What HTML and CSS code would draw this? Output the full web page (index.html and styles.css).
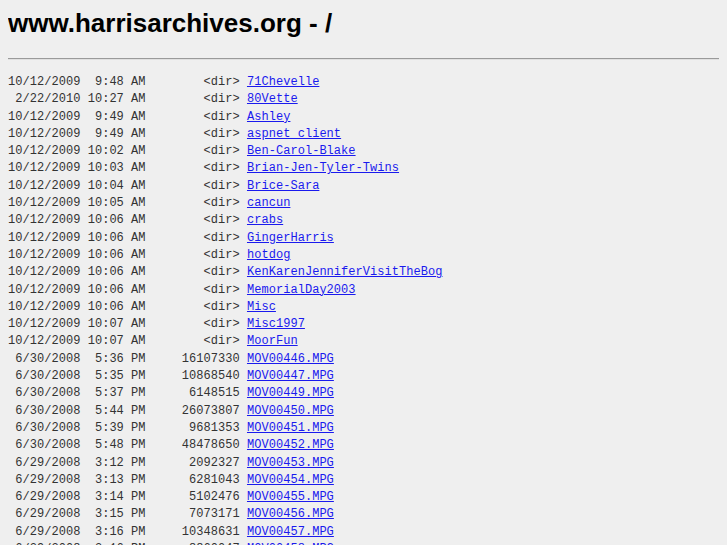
FILE: index.html
```html
<!DOCTYPE html>
<html>
<head>
<meta charset="UTF-8">
<title>www.harrisarchives.org - /</title>
<link rel="stylesheet" href="styles.css">
</head>
<body>
<h1>www.harrisarchives.org - /</h1>
<hr>
<pre>
10/12/2009  9:48 AM        &lt;dir&gt; <a href="#">71Chevelle</a>
 2/22/2010 10:27 AM        &lt;dir&gt; <a href="#">80Vette</a>
10/12/2009  9:49 AM        &lt;dir&gt; <a href="#">Ashley</a>
10/12/2009  9:49 AM        &lt;dir&gt; <a href="#">aspnet_client</a>
10/12/2009 10:02 AM        &lt;dir&gt; <a href="#">Ben-Carol-Blake</a>
10/12/2009 10:03 AM        &lt;dir&gt; <a href="#">Brian-Jen-Tyler-Twins</a>
10/12/2009 10:04 AM        &lt;dir&gt; <a href="#">Brice-Sara</a>
10/12/2009 10:05 AM        &lt;dir&gt; <a href="#">cancun</a>
10/12/2009 10:06 AM        &lt;dir&gt; <a href="#">crabs</a>
10/12/2009 10:06 AM        &lt;dir&gt; <a href="#">GingerHarris</a>
10/12/2009 10:06 AM        &lt;dir&gt; <a href="#">hotdog</a>
10/12/2009 10:06 AM        &lt;dir&gt; <a href="#">KenKarenJenniferVisitTheBog</a>
10/12/2009 10:06 AM        &lt;dir&gt; <a href="#">MemorialDay2003</a>
10/12/2009 10:06 AM        &lt;dir&gt; <a href="#">Misc</a>
10/12/2009 10:07 AM        &lt;dir&gt; <a href="#">Misc1997</a>
10/12/2009 10:07 AM        &lt;dir&gt; <a href="#">MoorFun</a>
 6/30/2008  5:36 PM     16107330 <a href="#">MOV00446.MPG</a>
 6/30/2008  5:35 PM     10868540 <a href="#">MOV00447.MPG</a>
 6/30/2008  5:37 PM      6148515 <a href="#">MOV00449.MPG</a>
 6/30/2008  5:44 PM     26073807 <a href="#">MOV00450.MPG</a>
 6/30/2008  5:39 PM      9681353 <a href="#">MOV00451.MPG</a>
 6/30/2008  5:48 PM     48478650 <a href="#">MOV00452.MPG</a>
 6/29/2008  3:12 PM      2092327 <a href="#">MOV00453.MPG</a>
 6/29/2008  3:13 PM      6281043 <a href="#">MOV00454.MPG</a>
 6/29/2008  3:14 PM      5102476 <a href="#">MOV00455.MPG</a>
 6/29/2008  3:15 PM      7073171 <a href="#">MOV00456.MPG</a>
 6/29/2008  3:16 PM     10348631 <a href="#">MOV00457.MPG</a>
 6/29/2008  3:16 PM      8860047 <a href="#">MOV00458.MPG</a>
</pre>
</body>
</html>
```

FILE: styles.css
```css
body {
    margin: 8px;
    background: #efefef;
    color: #000;
}

h1 {
    font-family: "Liberation Sans", Arial, sans-serif;
    font-size: 26px;
    font-weight: bold;
    margin: 0;
    line-height: 30px;
}

hr {
    margin: 20px 0 0 0;
    border: none;
    border-top: 1px solid #9a9a9a;
    border-bottom: 1px solid #e0e0e0;
    height: 0;
}

pre {
    font-family: "Liberation Mono", "Courier New", monospace;
    font-size: 12px;
    letter-spacing: 0.04px;
    line-height: 17.3px;
    color: #333;
    margin: 14px 0 0 0;
}

a {
    color: #1a1aee;
}
```
